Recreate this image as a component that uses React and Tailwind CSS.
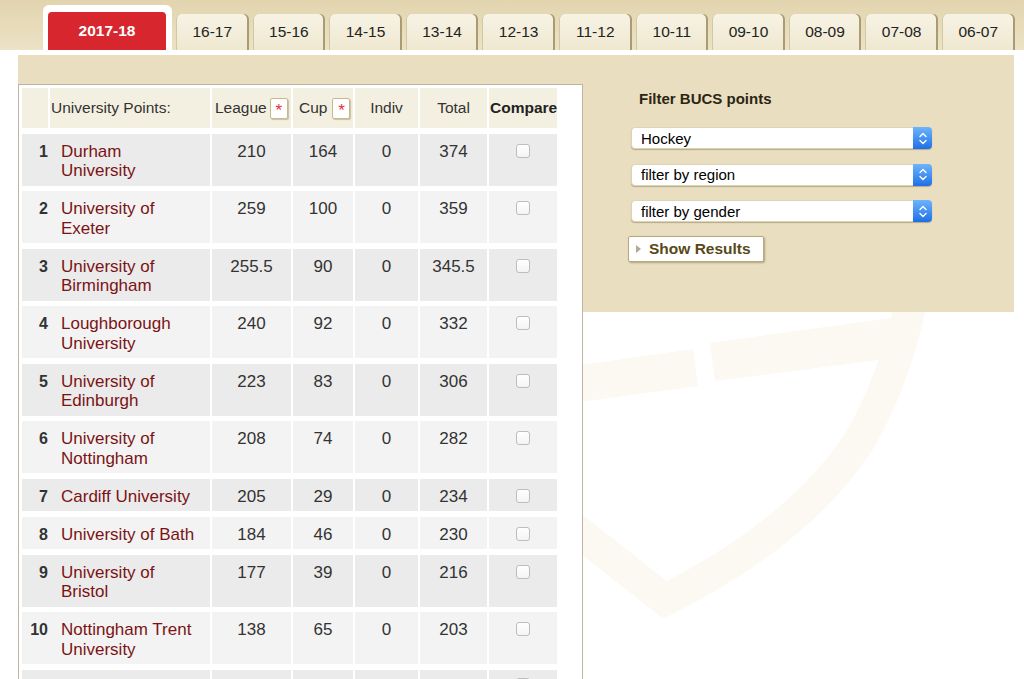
import React from "react";

const seasons = ["16-17", "15-16", "14-15", "13-14", "12-13", "11-12", "10-11", "09-10", "08-09", "07-08", "06-07"];

const rows = [
  [1, "Durham University", "210", "164", "0", "374"],
  [2, "University of Exeter", "259", "100", "0", "359"],
  [3, "University of Birmingham", "255.5", "90", "0", "345.5"],
  [4, "Loughborough University", "240", "92", "0", "332"],
  [5, "University of Edinburgh", "223", "83", "0", "306"],
  [6, "University of Nottingham", "208", "74", "0", "282"],
  [7, "Cardiff University", "205", "29", "0", "234"],
  [8, "University of Bath", "184", "46", "0", "230"],
  [9, "University of Bristol", "177", "39", "0", "216"],
  [10, "Nottingham Trent University", "138", "65", "0", "203"],
];

const cols = "grid grid-cols-[26px_160px_79px_60px_63px_67px_68px] gap-x-[2px]";

function Star() {
  return (
    <span className="flex items-center justify-center w-[18px] h-[21px] bg-white border border-[#c8b98d] rounded-[2px] shadow-[1px_1px_1px_rgba(120,100,50,0.35)] text-[#e2313b] text-[17px] leading-none pt-[5px]">
      *
    </span>
  );
}

function Select({ label }) {
  return (
    <div className="flex items-center w-[301px] h-[22px] bg-white rounded-[4px] shadow-[0_1px_1px_rgba(90,70,30,0.35)] border border-[#ddd3b8]">
      <span className="flex-1 pl-[9px] text-[15px] text-black leading-none">{label}</span>
      <span className="flex items-center justify-center w-[19px] h-[22px] -mr-[1px] rounded-r-[4px] bg-gradient-to-b from-[#6db4fb] to-[#1c6fe8]">
        <svg width="8" height="13" viewBox="0 0 8 13" fill="none" stroke="white" strokeWidth="1.4" strokeLinecap="round" strokeLinejoin="round">
          <path d="M1 4.5 L4 1.5 L7 4.5" />
          <path d="M1 8.5 L4 11.5 L7 8.5" />
        </svg>
      </span>
    </div>
  );
}

function Checkbox() {
  return <div className="mx-auto w-[14px] h-[14px] rounded-[3px] border border-[#bdbdbd] bg-gradient-to-b from-white to-[#f4f4f4]" />;
}

export default function App() {
  return (
    <div className="relative isolate w-[1024px] h-[679px] overflow-hidden bg-white font-['Liberation_Sans',Arial,sans-serif]">
      {/* faint crest watermark */}
      <svg className="absolute left-0 top-0 z-0" width="1024" height="679" viewBox="0 0 1024 679">
        <path d="M 500 470 L 665 600 Q 800 532 860 440 Q 900 370 915 280" fill="none" stroke="#fbf9f2" strokeWidth="32" strokeLinejoin="miter" />
        <polygon points="560,368 693,349 698,386 565,404" fill="#fbf9f2" />
        <polygon points="710,343 905,316 910,356 715,381" fill="#fbf9f2" />
      </svg>

      <div className="relative z-10">
        {/* season tabs */}
        <div className="flex items-end h-[50px] pl-[43px] gap-[4px] bg-gradient-to-b from-[#e2d4ae] to-[#ece2c6]">
          <div className="flex w-[129px] h-[45px] pt-[7px] pl-[5px] pr-[6px] bg-white rounded-t-[6px]">
            <div className="flex-1 flex items-center justify-center rounded-t-[4px] bg-[#d8262f] text-white font-bold text-[15.5px]">
              2017-18
            </div>
          </div>
          {seasons.map((s) => (
            <div
              key={s}
              className="flex items-center justify-center w-[72.6px] h-[36px] rounded-t-[5px] bg-gradient-to-b from-[#f7f3e4] to-[#efe8d1] shadow-[inset_-2px_0_0_#a99c72,inset_1px_0_0_#d3c8a6] text-[15.5px] text-[#222]"
            >
              {s}
            </div>
          ))}
        </div>

        <div className="h-[5px]" />

        <div className="flex ml-[18px]">
          {/* points table */}
          <div className="w-[565px]">
            <div className="h-[29px] bg-[#e9dfc0]" />
            <div className="h-[595px] bg-white border border-b-0 border-[#bcb5a3] pt-[3px] pl-[3px] overflow-hidden">
              <div className="flex flex-col gap-y-[5.5px]">
                <div className={`${cols} h-[40px] text-[15.5px] text-[#333]`}>
                  <div className="bg-[#f4f0e1]" />
                  <div className="bg-[#f4f0e1] flex items-center pl-[1px]">University Points:</div>
                  <div className="bg-[#f4f0e1] flex items-center pl-[3px] gap-[3px]">
                    League <Star />
                  </div>
                  <div className="bg-[#f4f0e1] flex items-center pl-[6px] gap-[5px]">
                    Cup <Star />
                  </div>
                  <div className="bg-[#f4f0e1] flex items-center justify-center">Indiv</div>
                  <div className="bg-[#f4f0e1] flex items-center justify-center">Total</div>
                  <div className="bg-[#f4f0e1] flex items-center pl-[1px] font-bold text-[#222]">Compare</div>
                </div>

                {rows.map((r, i) => {
                  const bg = i % 2 === 0 ? "bg-[#ebebeb]" : "bg-[#f3f3f3]";
                  return (
                    <div key={r[0]} className={`${cols} text-[17px] leading-[19.5px] text-[#333]`}>
                      <div className={`col-span-2 ${bg} flex items-baseline pt-[8px] pb-[5px]`}>
                        <span className="w-[26px] text-right font-bold text-[16px]">{r[0]}</span>
                        <span className="ml-[13px] w-[136px] text-[#7b1315]">{r[1]}</span>
                      </div>
                      <div className={`${bg} text-center pt-[8px] pb-[5px]`}>{r[2]}</div>
                      <div className={`${bg} text-center pt-[8px] pb-[5px]`}>{r[3]}</div>
                      <div className={`${bg} text-center pt-[8px] pb-[5px]`}>{r[4]}</div>
                      <div className={`${bg} text-center pt-[8px] pb-[5px]`}>{r[5]}</div>
                      <div className={`${bg} pt-[10px]`}>
                        <Checkbox />
                      </div>
                    </div>
                  );
                })}

                {/* next row, cut off by the window */}
                <div className={`${cols} h-[52px]`}>
                  <div className="col-span-2 bg-[#ebebeb]" />
                  <div className="bg-[#ebebeb]" />
                  <div className="bg-[#ebebeb]" />
                  <div className="bg-[#ebebeb]" />
                  <div className="bg-[#ebebeb]" />
                  <div className="bg-[#ebebeb] pt-[8px]">
                    <Checkbox />
                  </div>
                </div>
              </div>
            </div>
          </div>

          {/* filter panel */}
          <div className="w-[431px] h-[257px] bg-[#e9dfc0] pl-[48px] pt-[35px]">
            <div className="ml-[8px] text-[15px] font-bold text-[#2b2614] leading-[17px]">Filter BUCS points</div>
            <div className="mt-[20px] flex flex-col gap-[14.5px]">
              <Select label="Hockey" />
              <Select label="filter by region" />
              <Select label="filter by gender" />
            </div>
            <button className="mt-[14px] -ml-[3px] flex items-center w-[136px] h-[26px] bg-white border border-[#b9aa7c] rounded-[2px] shadow-[1px_1px_2px_rgba(90,70,30,0.4)] pl-[7px]">
              <svg width="5" height="8" viewBox="0 0 5 8">
                <path d="M0 0 L5 4 L0 8 Z" fill="#b2aa95" />
              </svg>
              <span className="ml-[8px] text-[15.5px] font-bold text-[#584819]">Show Results</span>
            </button>
          </div>
        </div>
      </div>
    </div>
  );
}
